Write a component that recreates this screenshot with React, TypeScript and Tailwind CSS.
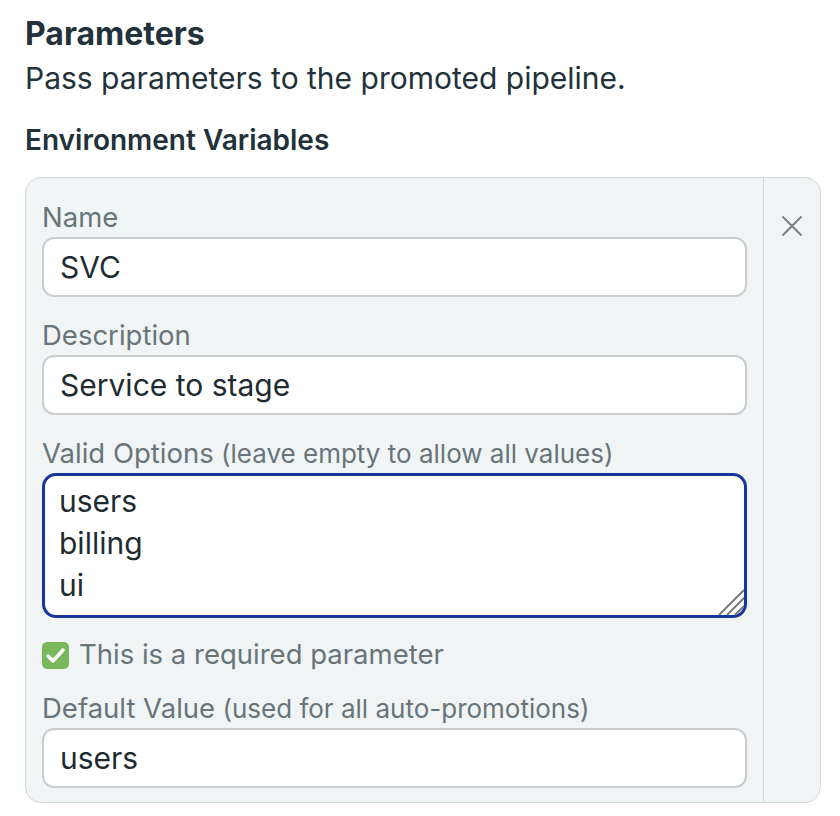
import { X } from 'lucide-react';

const font = { fontFamily: 'Inter, "Noto Sans", sans-serif' };

function Field({ label, hint, value }: { label: string; hint?: string; value: string }) {
  return (
    <div className="flex flex-col">
      <label className="h-10 whitespace-nowrap text-[27.5px] leading-10 text-[#67757b]">
        {label}
        {hint && <span className="text-[26px]"> {hint}</span>}
      </label>
      <input
        readOnly
        value={value}
        className="h-[60px] w-full rounded-xl border-2 border-[#c9cdcf] bg-white px-4 text-[30px] text-[#1e2b30] outline-none"
      />
    </div>
  );
}

export default function App() {
  return (
    <div className="min-h-screen bg-white px-[25px] pt-[14px] text-[#22313a]" style={font}>
      {/* Header */}
      <h2 className="text-[32px] font-bold leading-10">Parameters</h2>
      <p className="mt-1 text-[30px] leading-10">Pass parameters to the promoted pipeline.</p>
      <h3 className="mt-[22px] text-[28px] font-semibold leading-10">Environment Variables</h3>

      {/* Variable card */}
      <div className="mt-[17px] flex w-[796px] rounded-2xl border border-[#d3d8da] bg-[#f1f4f5]">
        <div className="flex flex-1 flex-col gap-[18px] px-4 pb-[14px] pt-[19px]">
          <Field label="Name" value="SVC" />
          <Field label="Description" value="Service to stage" />

          <div className="flex flex-col">
            <label className="h-10 whitespace-nowrap text-[27.5px] leading-10 text-[#67757b]">
              Valid Options<span className="text-[26px]"> (leave empty to allow all values)</span>
            </label>
            <div className="relative">
              <textarea
                readOnly
                value={'users\nbilling\nui'}
                className="block h-[145px] w-full resize-none rounded-[14px] border-[3px] border-[#17369a] bg-white px-[14px] pt-1 text-[30px] leading-[42px] text-[#1e2b30] outline-none"
              />
              <svg className="absolute bottom-[3px] right-[3px]" width="26" height="26" viewBox="0 0 26 26">
                <path d="M1 26 L26 1 M9 26 L26 9 M17 26 L26 17" stroke="#7a7a7a" strokeWidth="2" />
              </svg>
            </div>
          </div>

          <div className="-mt-px -mb-[5px] flex h-10 items-center gap-[10px]">
            <span className="flex h-[27px] w-[27px] items-center justify-center rounded-[5px] bg-[#78b85a]">
              <svg width="27" height="27" viewBox="0 0 27 27">
                <path d="M6 14 L11 19 L21 8" fill="none" stroke="white" strokeWidth="3.5" strokeLinecap="round" strokeLinejoin="round" />
              </svg>
            </span>
            <span className="text-[27.5px] text-[#67757b]">This is a required parameter</span>
          </div>

          <Field label="Default Value" hint="(used for all auto-promotions)" value="users" />
        </div>

        {/* Remove column */}
        <div className="flex w-[57px] justify-center border-l border-[#d3d8da] pt-[30px]">
          <X className="h-9 w-9 text-[#7a7f82]" strokeWidth={1.3} />
        </div>
      </div>
    </div>
  );
}
